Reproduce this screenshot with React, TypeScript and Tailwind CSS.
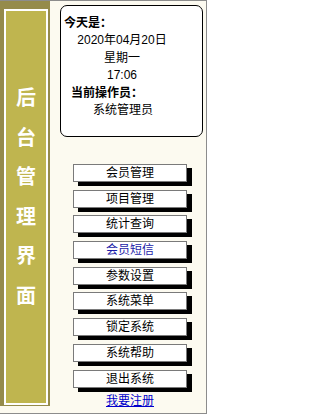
import React from 'react';

const menu = ['会员管理', '项目管理', '统计查询', '会员短信', '参数设置', '系统菜单', '锁定系统', '系统帮助', '退出系统'];
const title = ['后', '台', '管', '理', '界', '面'];

export default function App() {
  return (
    <div className="w-[210px] h-[415px] bg-white" style={{ fontFamily: '"Liberation Sans", "Noto Sans CJK SC", sans-serif' }}>
      <div className="w-[207px] h-[414px] flex border-t border-r border-b border-[#8c8c8c] bg-[#fcfaf0]">
        {/* left title bar */}
        <div className="w-[50px] h-[405px] bg-[#958b4b] pt-[8px] pl-[4px] pr-[2px] pb-[1px] shrink-0">
          <div className="h-full border-2 border-white bg-[#bfb54f] flex flex-col items-center pt-[68px]">
            {title.map((t) => (
              <div key={t} className="h-[39.5px] leading-[39.5px] text-[20px] font-bold text-white">
                {t}
              </div>
            ))}
          </div>
        </div>

        <div className="flex-1 flex flex-col">
          {/* date box */}
          <div className="mt-[4px] ml-[10px] w-[143px] h-[132px] border border-black rounded-[7px] bg-white pt-[9px] text-[12px] leading-[17.4px] text-black">
            <div className="pl-[3px] font-bold">今天是：</div>
            <div className="w-[122px] text-center">2020年04月20日</div>
            <div className="w-[122px] text-center">星期一</div>
            <div className="w-[122px] text-center">17:06</div>
            <div className="pl-[10px] font-bold">当前操作员：</div>
            <div className="w-[124px] text-center">系统管理员</div>
          </div>

          {/* menu */}
          <div className="mt-[27px] ml-[23px] flex flex-col gap-[7.7px]">
            {menu.map((m) => (
              <div
                key={m}
                className={`w-[114px] h-[18px] border border-[#7a7a7a] bg-white shadow-[5px_4px_0_#000] text-center text-[12px] leading-[16px] ${
                  m === '会员短信' ? 'text-[#1c1ca8]' : 'text-black'
                }`}
              >
                {m}
              </div>
            ))}
          </div>
          <div className="mt-[6px] ml-[23px] w-[114px] text-center text-[12px] leading-[14px]">
            <a href="#" className="text-[#0000cc] underline">我要注册</a>
          </div>
        </div>
      </div>
    </div>
  );
}
